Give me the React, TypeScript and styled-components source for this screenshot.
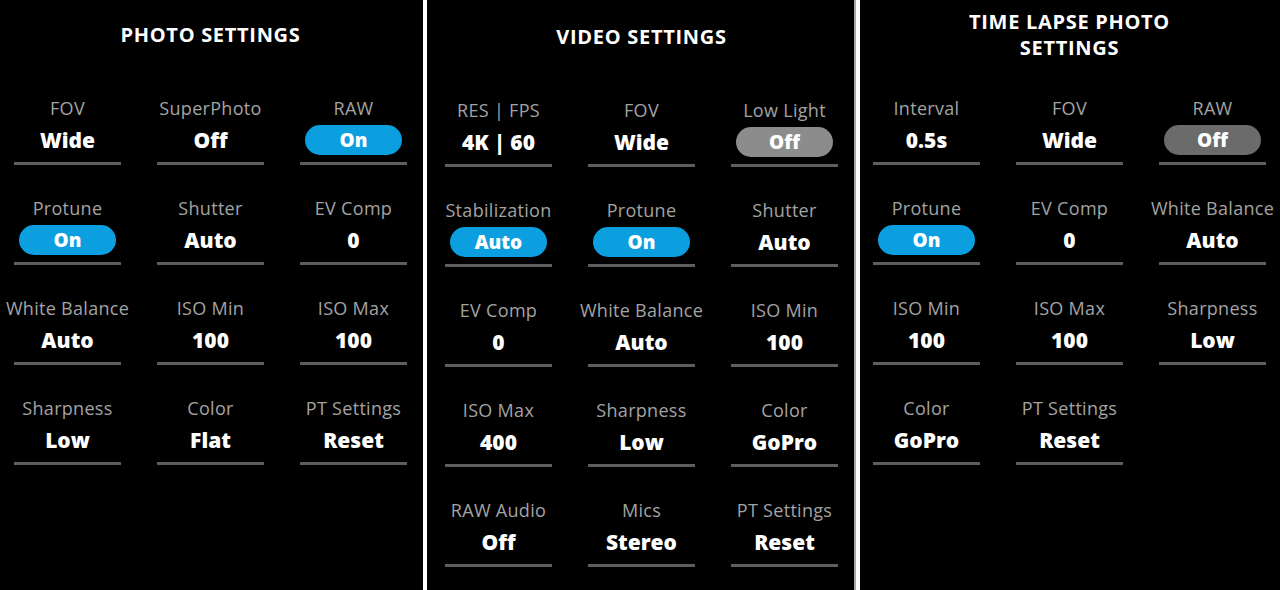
import React from "react";
import styled, { createGlobalStyle } from "styled-components";

type Kind = "text" | "on" | "off" | "offDark";
type Setting = { label: string; value: string; kind?: Kind };

const photo: Setting[] = [
  { label: "FOV", value: "Wide" },
  { label: "SuperPhoto", value: "Off" },
  { label: "RAW", value: "On", kind: "on" },
  { label: "Protune", value: "On", kind: "on" },
  { label: "Shutter", value: "Auto" },
  { label: "EV Comp", value: "0" },
  { label: "White Balance", value: "Auto" },
  { label: "ISO Min", value: "100" },
  { label: "ISO Max", value: "100" },
  { label: "Sharpness", value: "Low" },
  { label: "Color", value: "Flat" },
  { label: "PT Settings", value: "Reset" },
];

const video: Setting[] = [
  { label: "RES | FPS", value: "4K | 60" },
  { label: "FOV", value: "Wide" },
  { label: "Low Light", value: "Off", kind: "off" },
  { label: "Stabilization", value: "Auto", kind: "on" },
  { label: "Protune", value: "On", kind: "on" },
  { label: "Shutter", value: "Auto" },
  { label: "EV Comp", value: "0" },
  { label: "White Balance", value: "Auto" },
  { label: "ISO Min", value: "100" },
  { label: "ISO Max", value: "400" },
  { label: "Sharpness", value: "Low" },
  { label: "Color", value: "GoPro" },
  { label: "RAW Audio", value: "Off" },
  { label: "Mics", value: "Stereo" },
  { label: "PT Settings", value: "Reset" },
];

const timelapse: Setting[] = [
  { label: "Interval", value: "0.5s" },
  { label: "FOV", value: "Wide" },
  { label: "RAW", value: "Off", kind: "offDark" },
  { label: "Protune", value: "On", kind: "on" },
  { label: "EV Comp", value: "0" },
  { label: "White Balance", value: "Auto" },
  { label: "ISO Min", value: "100" },
  { label: "ISO Max", value: "100" },
  { label: "Sharpness", value: "Low" },
  { label: "Color", value: "GoPro" },
  { label: "PT Settings", value: "Reset" },
];

const pillColors: Record<Kind, string> = {
  text: "transparent",
  on: "#0b9fdf",
  off: "#8c8c8c",
  offDark: "#6b6b6b",
};

function SettingsPanel({
  title,
  items,
  width,
  pad,
  offset = 0,
}: {
  title: string[];
  items: Setting[];
  width: number;
  pad: number;
  offset?: number;
}) {
  return (
    <Panel $width={width} $pad={pad} $offset={offset}>
      <Header>
        {title.map((line) => (
          <Title key={line}>{line}</Title>
        ))}
      </Header>
      <Grid>
        {items.map((item) => (
          <Cell key={item.label}>
            <Label>{item.label}</Label>
            <ValueRow>
              {item.kind && item.kind !== "text" ? (
                <Pill $bg={pillColors[item.kind]}>{item.value}</Pill>
              ) : (
                <Value>{item.value}</Value>
              )}
            </ValueRow>
            <Underline />
          </Cell>
        ))}
      </Grid>
    </Panel>
  );
}

export default function App() {
  return (
    <>
      <GlobalStyle />
      <Page>
        <SettingsPanel title={["PHOTO SETTINGS"]} items={photo} width={423} pad={14} />
        <Divider $width={4} $color="#ffffff" />
        <SettingsPanel
          title={["VIDEO SETTINGS"]}
          items={video}
          width={427}
          pad={18}
          offset={2}
        />
        <Divider $width={2} $color="#a8a8a8" />
        <Divider $width={4} $color="#ffffff" />
        <SettingsPanel
          title={["TIME LAPSE PHOTO", "SETTINGS"]}
          items={timelapse}
          width={420}
          pad={13}
        />
      </Page>
    </>
  );
}

const GlobalStyle = createGlobalStyle`
  html, body {
    margin: 0;
    padding: 0;
    background: #000;
  }
  body {
    font-family: "Open Sans", "Liberation Sans", sans-serif;
  }
`;

const Page = styled.main`
  display: flex;
  width: 1280px;
  height: 590px;
  background: #000;
  overflow: hidden;
`;

const Panel = styled.section<{ $width: number; $pad: number; $offset: number }>`
  flex: none;
  width: ${(p) => p.$width}px;
  box-sizing: border-box;
  padding: ${(p) => p.$offset}px 0 0 ${(p) => p.$pad}px;
  display: flex;
  flex-direction: column;
`;

const Divider = styled.div<{ $width: number; $color: string }>`
  flex: none;
  width: ${(p) => p.$width}px;
  background: ${(p) => p.$color};
`;

const Header = styled.header`
  height: 70px;
  width: 393px;
  display: flex;
  flex-direction: column;
  align-items: center;
  justify-content: center;
`;

const Title = styled.h2`
  margin: 0;
  color: #fff;
  font-size: 20px;
  font-weight: 700;
  letter-spacing: 0.7px;
  line-height: 26px;
  white-space: nowrap;
`;

const Grid = styled.div`
  display: grid;
  grid-template-columns: repeat(3, 107px);
  column-gap: 36px;
  row-gap: 32px;
  padding-top: 27px;
`;

const Cell = styled.div`
  display: flex;
  flex-direction: column;
  align-items: center;
`;

const Label = styled.div`
  height: 22px;
  line-height: 22px;
  font-size: 18px;
  letter-spacing: 0.3px;
  color: #a3a3a3;
  white-space: nowrap;
  display: flex;
  justify-content: center;
`;

const ValueRow = styled.div`
  margin-top: 5px;
  height: 32px;
  width: 100%;
  display: flex;
  align-items: center;
  justify-content: center;
`;

const Value = styled.span`
  color: #fff;
  font-size: 21px;
  font-weight: 800;
  white-space: nowrap;
`;

const Pill = styled.span<{ $bg: string }>`
  width: 97px;
  height: 30px;
  border-radius: 15px;
  background: ${(p) => p.$bg};
  color: #fff;
  font-size: 19px;
  font-weight: 800;
  display: flex;
  align-items: center;
  justify-content: center;
`;

const Underline = styled.div`
  margin-top: 6px;
  width: 100%;
  height: 3px;
  background: #5e5e5e;
`;
